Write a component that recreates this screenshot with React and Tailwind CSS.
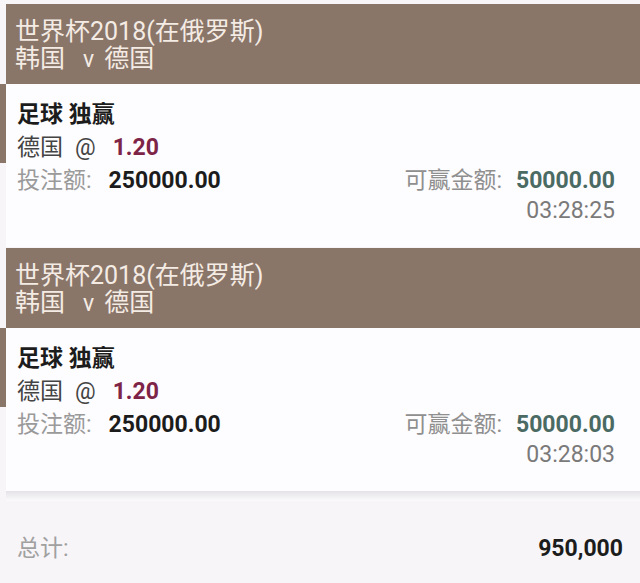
import React from "react";

const font = { fontFamily: '"Roboto", "Noto Sans CJK SC", sans-serif' };

const BetBlock = ({ time, first }) => (
  <div className={first ? "pt-[4px]" : "pt-[1px]"}>
    <div className="ml-[6px] bg-[#8a7569] text-[#f4ece4] text-[25px] leading-[27px] pl-[9px] pt-[14px] pb-[12px] h-[80px]">
      <div>世界杯2018(在俄罗斯)</div>
      <div className="flex items-baseline">
        <span>韩国</span>
        <span className="ml-[18px] mr-[10px] text-[23px]">v</span>
        <span>德国</span>
      </div>
    </div>
    <div className="flex">
      <div className="w-[6px] shrink-0">
        <div className="h-[79px] bg-[#8a7569]" />
      </div>
      <div className="flex-1 bg-[#fdfcfe] h-[163px] pl-[11px] pr-[25px] pt-[14px] text-[23px] leading-[33px]">
        <div className="font-bold text-[#1c1c1c]">足球 独赢</div>
        <div className="text-[#444]">
          德国<span className="ml-[12px]">@</span>
          <span className="ml-[17px] font-bold text-[#7d2447]">1.20</span>
        </div>
        <div className="flex justify-between">
          <div>
            <span className="text-[#9a9a9a]">投注额:</span>
            <span className="ml-[17px] font-bold text-[#1c1c1c]">250000.00</span>
          </div>
          <div>
            <span className="text-[#8f8f8f]">可赢金额:</span>
            <span className="ml-[14px] font-bold text-[#4a6a63]">50000.00</span>
          </div>
        </div>
        <div className="text-right text-[#7a7a7a] mt-[-3px]">{time}</div>
      </div>
    </div>
  </div>
);

export default function App() {
  return (
    <div className="w-[640px] h-[583px] bg-[#f7f5f8] overflow-hidden" style={font}>
      <BetBlock time="03:28:25" first />
      <BetBlock time="03:28:03" />
      <div className="ml-[6px] h-[10px] bg-gradient-to-b from-[#e4e2e7] to-[#fbfafc]" />
      <div className="flex justify-between items-center px-[17px] pt-[31px] text-[23px]">
        <span className="text-[#a0a0a0]">总计:</span>
        <span className="font-bold text-[#1c1c1c]">950,000</span>
      </div>
    </div>
  );
}
